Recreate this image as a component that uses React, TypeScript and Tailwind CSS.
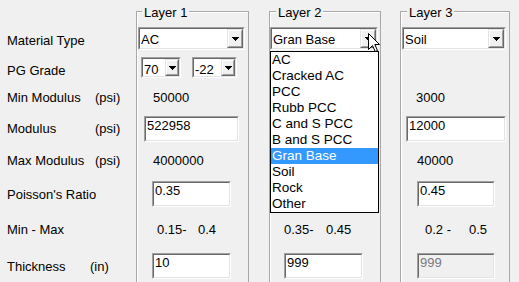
import React from 'react'

const sunkenOuter = 'border border-t-[#a0a0a0] border-l-[#a0a0a0] border-b-white border-r-white'
const sunkenInner = 'border border-t-[#696969] border-l-[#696969] border-b-[#e3e3e3] border-r-[#e3e3e3]'

const materials = ['AC', 'Cracked AC', 'PCC', 'Rubb PCC', 'C and S PCC', 'B and S PCC', 'Gran Base', 'Soil', 'Rock', 'Other']

function Arrow() {
  return (
    <svg width="7" height="4" viewBox="0 0 7 4" shapeRendering="crispEdges">
      <rect x="0" y="0" width="7" height="1" />
      <rect x="1" y="1" width="5" height="1" />
      <rect x="2" y="2" width="3" height="1" />
      <rect x="3" y="3" width="1" height="1" />
    </svg>
  )
}

function Combo({ value, className, btn }: { value: string; className: string; btn: string }) {
  return (
    <div className={`${sunkenOuter} flex ${className}`}>
      <div className={`${sunkenInner} flex flex-1 bg-white`}>
        <div className="flex-1 pl-px pt-[3px] overflow-hidden whitespace-nowrap">{value}</div>
        <div className={`${btn} flex border border-t-[#e3e3e3] border-l-[#e3e3e3] border-b-[#696969] border-r-[#696969]`}>
          <div className="flex flex-1 items-center justify-center border border-t-white border-l-white border-b-[#a0a0a0] border-r-[#a0a0a0] bg-[#f0f0f0]">
            <Arrow />
          </div>
        </div>
      </div>
    </div>
  )
}

function Edit({ value, className, disabled }: { value: string; className: string; disabled?: boolean }) {
  return (
    <div className={`${sunkenOuter} flex ${className}`}>
      <div className={`${sunkenInner} flex-1 pl-px ${disabled ? 'bg-[#f0f0f0] text-[#7a7a7a]' : 'bg-white'}`}>{value}</div>
    </div>
  )
}

function Group({ title, className, legend, children }: { title: string; className: string; legend: string; children: React.ReactNode }) {
  return (
    <div className={`relative mt-[11px] h-[290px] shrink-0 border border-[#a8a8a8] shadow-[inset_1px_1px_0_#fff] ${className}`}>
      <span className={`absolute -top-[7px] px-[2px] bg-[#f0f0f0] ${legend}`}>{title}</span>
      <div className="flex flex-col pt-[14px]">{children}</div>
    </div>
  )
}

function Cursor() {
  return (
    <svg className="absolute left-[368px] top-[33px]" width="13" height="20" viewBox="0 0 13 20">
      <path d="M0.5 0.5 L0.5 16.5 L4.5 12.5 L7.2 18.5 L9.5 17.5 L6.8 11.5 L11.5 11.5 Z" fill="#fff" stroke="#000" strokeWidth="1" strokeLinejoin="miter" />
    </svg>
  )
}

export default function App() {
  return (
    <div className="relative w-[519px] h-[282px] overflow-hidden bg-[#f0f0f0] font-['Liberation_Sans',Arial,sans-serif] text-[13px] leading-[15px] text-black">
      <div className="flex">
        <div className="flex w-[136px] shrink-0 flex-col pl-[7px] pt-[26px]">
          <div className="flex h-[28px] items-center">Material Type</div>
          <div className="flex h-[28px] items-center pt-[5px]">PG Grade</div>
          <div className="flex h-[30px] items-center"><span className="w-[88px]">Min Modulus</span>(psi)</div>
          <div className="flex h-[32px] items-center"><span className="w-[88px]">Modulus</span>(psi)</div>
          <div className="flex h-[33px] items-center"><span className="w-[88px]">Max Modulus</span>(psi)</div>
          <div className="flex h-[34px] items-center">Poisson's Ratio</div>
          <div className="flex h-[36px] items-center">Min - Max</div>
          <div className="flex h-[38px] items-center"><span className="w-[83px]">Thickness</span>(in)</div>
        </div>

        <Group title="Layer 1" className="w-[113px]" legend="left-[5px]">
          <div className="flex h-[28px] items-start">
            <Combo value="AC" className="ml-px mt-px w-[107px] h-[23px]" btn="w-[16px]" />
          </div>
          <div className="flex h-[28px] items-start">
            <Combo value="70" className="ml-[4px] mt-[3px] w-[40px] h-[21px]" btn="w-[14px]" />
            <Combo value="-22" className="ml-[11px] mt-[3px] w-[45px] h-[21px]" btn="w-[14px]" />
          </div>
          <div className="flex h-[30px] items-center pl-[16px]">50000</div>
          <div className="flex h-[32px] items-start">
            <Edit value="522958" className="ml-[7px] mt-[4px] w-[95px] h-[26px]" />
          </div>
          <div className="flex h-[33px] items-center pl-[16px]">4000000</div>
          <div className="flex h-[34px] items-start">
            <Edit value="0.35" className="ml-[15px] mt-[4px] w-[79px] h-[26px]" />
          </div>
          <div className="flex h-[36px] items-center pl-[20px]"><span className="w-[41px]">0.15-</span>0.4</div>
          <div className="flex h-[38px] items-start">
            <Edit value="10" className="ml-[15px] mt-[6px] w-[79px] h-[26px]" />
          </div>
        </Group>

        <Group title="Layer 2" className="ml-[20px] w-[112px]" legend="left-[6px]">
          <div className="flex h-[28px] items-start">
            <Combo value="Gran Base" className="mt-px w-[108px] h-[23px]" btn="w-[16px]" />
          </div>
          <div className="h-[28px]" />
          <div className="h-[30px]" />
          <div className="h-[32px]" />
          <div className="h-[33px]" />
          <div className="h-[34px]" />
          <div className="flex h-[36px] items-center pl-[14px]"><span className="w-[42px]">0.35-</span>0.45</div>
          <div className="flex h-[38px] items-start">
            <Edit value="999" className="ml-[14px] mt-[6px] w-[79px] h-[26px]" />
          </div>

          <ul className="absolute left-0 top-[39px] w-[109px] border border-black bg-white text-[13.5px]">
            {materials.map((m) => (
              <li
                key={m}
                className={`h-[16px] pl-px leading-[16px] whitespace-nowrap ${m === 'Gran Base' ? 'bg-[#3399ff] text-white' : ''}`}
              >
                {m}
              </li>
            ))}
          </ul>
        </Group>

        <Group title="Layer 3" className="ml-[19px] w-[110px]" legend="left-[6px]">
          <div className="flex h-[28px] items-start">
            <Combo value="Soil" className="ml-px mt-px w-[104px] h-[23px]" btn="w-[16px]" />
          </div>
          <div className="h-[28px]" />
          <div className="flex h-[30px] items-center pl-[15px]">3000</div>
          <div className="flex h-[32px] items-start">
            <Edit value="12000" className="ml-[5px] mt-[4px] w-[100px] h-[26px]" />
          </div>
          <div className="flex h-[33px] items-center pl-[16px]">40000</div>
          <div className="flex h-[34px] items-start">
            <Edit value="0.45" className="ml-[16px] mt-[4px] w-[78px] h-[26px]" />
          </div>
          <div className="flex h-[36px] items-center pl-[24px]"><span className="w-[44px]">0.2 -</span>0.5</div>
          <div className="flex h-[38px] items-start">
            <Edit value="999" disabled className="ml-[16px] mt-[6px] w-[78px] h-[26px]" />
          </div>
        </Group>
      </div>

      <Cursor />
    </div>
  )
}
